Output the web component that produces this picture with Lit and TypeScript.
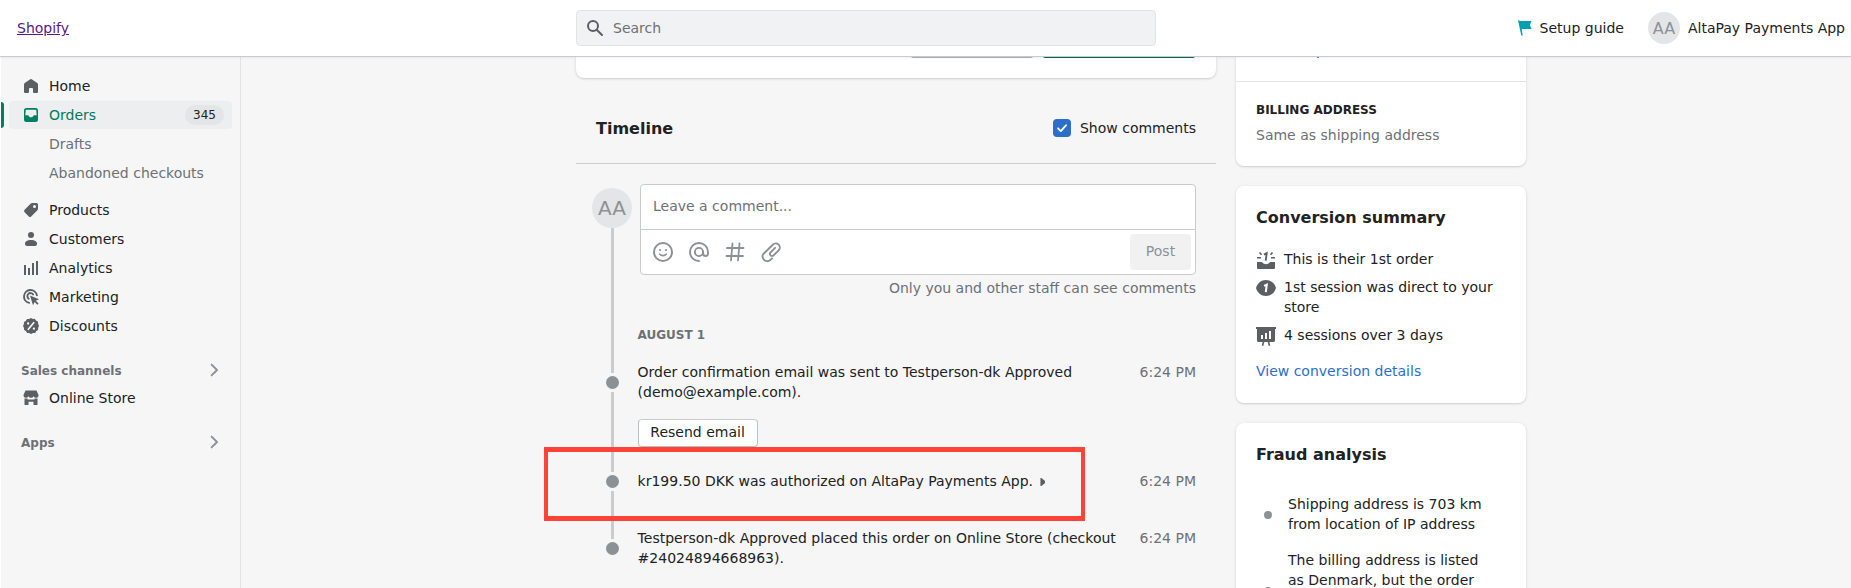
import { LitElement, html, css, svg, nothing } from "lit";
import { customElement, property } from "lit/decorators.js";

const ICONS: Record<string, unknown> = {
  home: svg`<path d="M9.300 3.200a1.100 1.100 0 0 1 1.400 0l5.600 3.700c.4.350.7.850.7 1.400V16a1 1 0 0 1-1 1h-3a1 1 0 0 1-1-1v-3a1 1 0 0 0-1-1H9a1 1 0 0 0-1 1v3a1 1 0 0 1-1 1H4a1 1 0 0 1-1-1V8.300c0-.55.3-1.050.7-1.400z"/>`,
  orders: svg`<path fill-rule="evenodd" d="M5.500 3h9A2.500 2.500 0 0 1 17 5.500v9a2.500 2.500 0 0 1-2.500 2.500h-9A2.500 2.500 0 0 1 3 14.500v-9A2.500 2.500 0 0 1 5.500 3zm0 1.700a.8.800 0 0 0-.8.700L4.300 10.200H6.800c.5 0 .8.300 1 .700.3.800 1.100 1.300 2.200 1.300s1.900-.5 2.200-1.300c.2-.4.5-.7 1-.7h2.500l-.4-4.800a.8.800 0 0 0-.8-.7z"/>`,
  products: svg`<path fill-rule="evenodd" d="M11.300 3H15.500A1.500 1.500 0 0 1 17 4.500v4.200c0 .6-.2 1.100-.6 1.500l-6.200 6.200a1.700 1.700 0 0 1-2.400 0l-4.200-4.200a1.700 1.700 0 0 1 0-2.400l6.200-6.200c.4-.4.900-.6 1.500-.6zM13.500 8a1.500 1.500 0 1 0 0-3 1.500 1.500 0 0 0 0 3z"/>`,
  customers: svg`<circle cx="10" cy="6" r="3"/><path d="M4 14.300C4 12.400 6.600 11 10 11s6 1.400 6 3.300V15a2 2 0 0 1-2 2H6a2 2 0 0 1-2-2z"/>`,
  analytics: svg`<path d="M3 7h2v10H3zM7 10h2v7H7zM11 5h2v12h-2zM15 3h2v14h-2z"/>`,
  marketing: svg`<g fill="none" stroke="currentColor" stroke-width="1.900" stroke-linecap="round"><path d="M8.200 15.900a6.500 6.500 0 1 1 7.700-7.500"/><path d="M7.700 11.700a3.100 3.100 0 1 1 4.400-4.200"/></g><path d="M9 8.600l9 3.600-3.200 1.600 2.800 2.800-1.200 1.200-2.800-2.800L12 18.200z"/>`,
  discounts: svg`<path fill-rule="evenodd" d="M10 2l1.800.9 2-.1 1.200 1.700 1.900.9.200 2L18 10l-.9 1.900v2l-1.800 1.200-1.100 1.800-2.100.1L10 18l-1.900-.9-2-.2-1.200-1.800-1.800-1.100-.1-2.100L2 10l.9-1.900.1-2 1.800-1.200L6 3.100l2.100-.2z"/><path d="M7.300 13.300L12.700 6.700" stroke="#f6f6f7" stroke-width="1.700" stroke-linecap="round"/><circle cx="7.100" cy="7.500" r="1.150" fill="#f6f6f7"/><circle cx="12.900" cy="12.700" r="1.150" fill="#f6f6f7"/>`,
  store: svg`<path d="M4.500 2.500h11L17.500 7v.8a2.100 2.100 0 0 1-2.300 1.900 2.600 2.600 0 0 1-2.600-1.500A2.700 2.700 0 0 1 10 9.700a2.700 2.700 0 0 1-2.600-1.500 2.600 2.600 0 0 1-2.600 1.500A2.200 2.200 0 0 1 2.500 7.800V7z"/><path d="M3.500 10.600h3v1h7v-1h3V17h-4v-3.300H7.500V17h-4z"/>`,
  chevron: svg`<path d="M7.600 4.600l5.400 5.400-5.400 5.400" fill="none" stroke="currentColor" stroke-width="1.900" stroke-linecap="round" stroke-linejoin="round"/>`,
  search: svg`<circle cx="8" cy="8" r="5" fill="none" stroke="currentColor" stroke-width="2"/><path d="M11.700 11.700L17 17" stroke="currentColor" stroke-width="2" stroke-linecap="round"/>`,
  flag: svg`<path d="M3 2.200h1.300L4.500 3H16.600l-1.900 4.100 2 4H6.700L7.700 17.500H6.300z"/>`,
  smile: svg`<circle cx="10" cy="10" r="9" fill="none" stroke="currentColor" stroke-width="2"/><path d="M6.800 12.200a4.300 4.300 0 0 0 6.400 0" fill="none" stroke="currentColor" stroke-width="1.600" stroke-linecap="round"/><circle cx="7" cy="8" r="1.100"/><circle cx="13" cy="8" r="1.100"/>`,
  mention: svg`<g fill="none" stroke="currentColor" stroke-width="1.900" stroke-linecap="round"><circle cx="10" cy="10" r="4.100"/><path d="M14.100 10v1.500a2.450 2.450 0 0 0 4.900 0V10a9 9 0 1 0-9 9"/></g>`,
  hash: svg`<path d="M7.500 1.500l-1.500 17M14.500 1.500l-1.500 17M2 6h16.500M1.500 14H18" fill="none" stroke="currentColor" stroke-width="1.800" stroke-linecap="round"/>`,
  clip: svg`<path d="M11 16.300l-1.300 1.300c-1.500 1.500-3.900 1.800-5.800.9-2.700-1.700-3.100-4.900-1.300-6.800l9.200-9c1.700-1.700 4.200-1.700 5.800-.1s1.600 4.100 0 5.700l-5 5a2.100 2.100 0 0 1-3-3l4.500-4.500" fill="none" stroke="currentColor" stroke-width="1.900" stroke-linecap="round" stroke-linejoin="round"/>`,
  check: svg`<path d="M5.600 10.300l3.100 3.100 5.900-6.600" fill="none" stroke="currentColor" stroke-width="2" stroke-linecap="round" stroke-linejoin="round"/>`,
  firstOrder: svg`<path d="M1 12h4.300c.6 0 1 .3 1.400.8.800 1 2 1.400 3.300 1.400s2.500-.4 3.300-1.400c.4-.5.800-.8 1.400-.8H19v6a1 1 0 0 1-1 1H2a1 1 0 0 1-1-1z"/><path d="M1 7.700h4M15 7.700h4M3.500 2.500l2 2.200M16.500 2.500l-2 2.200" stroke="currentColor" stroke-width="1.600"/><path d="M8 4.700l2.700-1.500-1 7.500" fill="none" stroke="currentColor" stroke-width="1.900"/>`,
  firstSession: svg`<path d="M10 2c5 0 8.600 3.300 10 8-1.400 4.700-5 8-10 8S1.400 14.700 0 10c1.400-4.700 5-8 10-8z"/><path d="M8.100 7.900l2.700-1.300-1 7.600" fill="none" stroke="#fff" stroke-width="2"/>`,
  sessions: svg`<path fill-rule="evenodd" d="M0 1h20v2h-1v11.500a1.500 1.500 0 0 1-1.500 1.500h-15A1.500 1.500 0 0 1 1 14.500V3H0zM5 9v4h2V9zm4-2v6h2V7zm4-2v8h2V5z"/><path d="M7.500 16l-1 3.700M12.500 16l1 3.700" stroke="currentColor" stroke-width="1.600"/>`,
};

@customElement("ui-icon")
class UiIcon extends LitElement {
  static styles = css`
    :host { display: block; width: 20px; height: 20px; flex: none; }
    svg { display: block; width: 100%; height: 100%; fill: currentColor; }
  `;
  @property() name = "";
  render() {
    return html`<svg viewBox="0 0 20 20" aria-hidden="true">${ICONS[this.name] ?? nothing}</svg>`;
  }
}

@customElement("side-nav")
class SideNav extends LitElement {
  static styles = css`
    :host { display: block; box-sizing: border-box; width: 241px; padding: 16px 8px 0; border-right: 1px solid #e1e3e5; border-left: 1px solid #fff; color: #202223; }
    .group { display: grid; gap: 1px; }
    .later { margin-top: 9px; }
    .row { display: flex; align-items: center; height: 28px; padding: 0 8px 0 12px; border-radius: 4px; position: relative; }
    .row ui-icon { color: #5c5f62; margin-right: 8px; }
    .active { background: #edeeef; color: #007a5c; }
    .row.active ui-icon { color: #008060; }
    .active::before { content: ""; position: absolute; left: -8px; top: 1px; width: 3px; height: 26px; background: #008060; border-radius: 0 3px 3px 0; }
    .badge { margin-left: auto; padding: 0 8px; border-radius: 10px; line-height: 20px; font-size: 12px; background: #e4e5e7; color: #202223; }
    .sub { padding-left: 40px; color: #6d7175; }
    .section { display: flex; justify-content: space-between; align-items: center; height: 24px; padding: 0 8px 0 12px; font-size: 12px; font-weight: 700; color: #6d7175; }
    .section span { padding-top: 2px; }
    .section ui-icon { color: #8c9196; }
    .channels { margin-top: 18px; }
    .channels .row { margin-top: 2px; }
    .apps { margin-top: 18px; }
  `;
  row(icon: string, label: string) {
    return html`<div class="row"><ui-icon name=${icon}></ui-icon><span>${label}</span></div>`;
  }
  render() {
    return html`
      <nav>
        <div class="group">
          ${this.row("home", "Home")}
          <div class="row active"><ui-icon name="orders"></ui-icon><span>Orders</span><span class="badge">345</span></div>
          <div class="row sub">Drafts</div>
          <div class="row sub">Abandoned checkouts</div>
        </div>
        <div class="group later">
          ${this.row("products", "Products")} ${this.row("customers", "Customers")}
          ${this.row("analytics", "Analytics")} ${this.row("marketing", "Marketing")}
          ${this.row("discounts", "Discounts")}
        </div>
        <div class="channels">
          <div class="section"><span>Sales channels</span><ui-icon name="chevron"></ui-icon></div>
          ${this.row("store", "Online Store")}
        </div>
        <div class="section apps"><span>Apps</span><ui-icon name="chevron"></ui-icon></div>
      </nav>`;
  }
}

@customElement("order-timeline")
class OrderTimeline extends LitElement {
  static styles = css`
    :host { display: block; }
    .head { display: flex; justify-content: space-between; align-items: center; height: 70px; padding: 0 20px; border-bottom: 1px solid #c9cccf; }
    h2 { margin: 0; padding-top: 1px; font-size: 16px; font-weight: 600; }
    .toggle { display: flex; align-items: center; gap: 9px; }
    .box { width: 18px; height: 18px; border-radius: 4px; background: #2c6ecb; color: #fff; }
    .box ui-icon { width: 18px; height: 18px; }
    .composer { display: grid; grid-template-columns: 40px 556px; gap: 8px; padding: 20px 0 0 16px; }
    .rail { display: grid; grid-template-rows: 40px 1fr; padding-top: 4px; justify-items: center; }
    .avatar { width: 40px; height: 40px; border-radius: 50%; background: #e4e5e7; color: #8c9196; font-size: 20px; line-height: 41px; text-align: center; }
    .line { width: 3px; background: #c9cccf; margin-left: 1px; }
    .editor { border: 1px solid #c9cccf; border-radius: 4px; background: #fff; height: 89px; }
    .input { height: 44px; line-height: 43px; padding: 0 12px; color: #6d7175; border-bottom: 1px solid #c9cccf; }
    .tools { display: flex; align-items: center; gap: 16px; height: 44px; padding: 0 4px 0 12px; color: #8c9196; }
    .post { margin-left: auto; width: 61px; line-height: 34px; padding-bottom: 2px; border-radius: 4px; text-align: center; background: #f1f1f1; }
    .note { margin: 3px 0 0; line-height: 20px; text-align: right; color: #6d7175; }
    .date { margin: 27px 0 0 -2.400px; font-size: 12px; line-height: 20px; font-weight: 700; color: #6d7175; height: 36px; }
    .event { display: grid; grid-template-columns: 40px 480px 1fr; column-gap: 5.600px; padding: 0 20px 0 16px; line-height: 20px; }
    .track { display: grid; grid-template-rows: var(--before) 13px 1fr; row-gap: 3px; justify-items: center; }
    .dot { width: 13px; height: 13px; border-radius: 50%; background: #8c9196; margin-left: 1px; }
    .time { text-align: right; color: #6d7175; white-space: nowrap; }
    .e1 { height: 101px; --before: 12px; }
    .e1 .copy, .e1 .time { padding-top: 1px; }
    .e2 { height: 66px; --before: 10px; }
    .e2 .copy, .e2 .time { padding-top: 9px; }
    .e3 { --before: 11px; }
    .resend { display: block; box-sizing: border-box; width: 120px; height: 28px; margin: 17px 0 0; line-height: 25px; text-align: center; border: 1px solid #babfc3; border-top-color: #c9cccf; border-radius: 4px; background: #fff; }
    .caret { display: inline-block; width: 5px; height: 8px; margin-left: 3px; background: #5c5f62; clip-path: polygon(0 0, 20% 0, 100% 40%, 100% 60%, 20% 100%, 0 100%); }
  `;
  render() {
    return html`
      <div class="head">
        <h2>Timeline</h2>
        <div class="toggle"><span class="box"><ui-icon name="check"></ui-icon></span><span>Show comments</span></div>
      </div>
      <div class="composer">
        <div class="rail"><div class="avatar">AA</div><div class="line"></div></div>
        <div>
          <div class="editor">
            <div class="input">Leave a comment...</div>
            <div class="tools">
              <ui-icon name="smile"></ui-icon><ui-icon name="mention"></ui-icon>
              <ui-icon name="hash"></ui-icon><ui-icon name="clip"></ui-icon>
              <span class="post">Post</span>
            </div>
          </div>
          <p class="note">Only you and other staff can see comments</p>
          <p class="date">AUGUST 1</p>
        </div>
      </div>
      <div class="event e1">
        <div class="track"><div class="line"></div><div class="dot"></div><div class="line"></div></div>
        <div class="copy">Order confirmation email was sent to Testperson-dk Approved (demo@example.com).<span class="resend">Resend email</span></div>
        <div class="time">6:24 PM</div>
      </div>
      <div class="event e2">
        <div class="track"><div class="line"></div><div class="dot"></div><div class="line"></div></div>
        <div class="copy">kr199.50 DKK was authorized on AltaPay Payments App. <span class="caret"></span></div>
        <div class="time">6:24 PM</div>
      </div>
      <div class="event e3">
        <div class="track"><div class="line"></div><div class="dot"></div></div>
        <div class="copy">Testperson-dk Approved placed this order on Online Store (checkout #24024894668963).</div>
        <div class="time">6:24 PM</div>
      </div>`;
  }
}

@customElement("order-aside")
class OrderAside extends LitElement {
  static styles = css`
    :host { display: grid; gap: 20px; width: 290px; align-content: start; line-height: 20px; }
    .card { box-sizing: border-box; background: #fff; border-radius: 8px; box-shadow: 0 0 5px rgba(23,24,24,.05), 0 1px 2px rgba(23,24,24,.15); padding: 20px; }
    .address { padding: 0; border-radius: 0 0 8px 8px; height: 110px; }
    .above { height: 24px; padding: 1px 0 0 81px; border-bottom: 1px solid #e1e3e5; }
    .tail { width: 2px; height: 1px; background: #2c6ecb; opacity: .8; }
    .billing { padding: 18px 20px; }
    h3 { margin: 0 0 5px; font-size: 12px; line-height: 20px; font-weight: 700; }
    p { margin: 0; color: #6d7175; }
    h2 { margin: 0; font-size: 16px; line-height: 24px; font-weight: 600; }
    .conversion { height: 217px; }
    .facts { display: grid; gap: 8px; margin-top: 19px; }
    .fact { display: grid; grid-template-columns: 20px 1fr; gap: 8px; min-height: 20px; }
    .fact ui-icon { color: #5c5f62; margin: 1px 0 -1px; }
    .link { display: block; margin-top: 16px; color: #2c6ecb; }
    .fraud { height: 290px; }
    .risk { display: grid; grid-template-columns: 8px 205px; column-gap: 16px; align-items: center; padding-left: 8px; margin-bottom: 16px; }
    .long { min-height: 80px; }
    .long span { align-self: start; }
    .risks { padding-top: 27px; }
    .dot { width: 8px; height: 8px; border-radius: 50%; background: #8c9196; margin-top: 2px; }
  `;
  fact(icon: string, text: string) {
    return html`<div class="fact"><ui-icon name=${icon}></ui-icon><span>${text}</span></div>`;
  }
  render() {
    return html`
      <section class="card address">
        <div class="above"><div class="tail"></div></div>
        <div class="billing"><h3>BILLING ADDRESS</h3><p>Same as shipping address</p></div>
      </section>
      <section class="card conversion">
        <h2>Conversion summary</h2>
        <div class="facts">
          ${this.fact("firstOrder", "This is their 1st order")}
          ${this.fact("firstSession", "1st session was direct to your store")}
          ${this.fact("sessions", "4 sessions over 3 days")}
        </div>
        <span class="link">View conversion details</span>
      </section>
      <section class="card fraud">
        <h2>Fraud analysis</h2>
        <div class="risks">
          <div class="risk"><i class="dot"></i><span>Shipping address is 703 km from location of IP address</span></div>
          <div class="risk long"><i class="dot"></i><span>The billing address is listed<br />as Denmark, but the order</span></div>
        </div>
      </section>`;
  }
}

@customElement("app-root")
class AppRoot extends LitElement {
  static styles = css`
    :host { display: grid; grid-template-rows: 56px 532px; width: 1851px; height: 588px; overflow: hidden; position: relative; background: #f6f6f7; color: #202223; font: 14px/20px "DejaVu Sans", sans-serif; }
    .top { display: grid; grid-template-columns: 560px 580px 1fr; padding: 0 6px 0 16px; align-items: center; background: #fff; box-shadow: 0 1px 0 #c9cad0, 0 2px 2px rgba(0,0,0,.06); position: relative; z-index: 1; }
    .brand { color: #551a8b; text-decoration: underline; padding-left: 1px; }
    .search { box-sizing: border-box; height: 36px; display: flex; align-items: center; gap: 8px; padding-left: 8px; border: 1px solid #e1e3e5; border-radius: 4px; background: #f1f2f4; color: #6d7175; }
    .search ui-icon { color: #5c5f62; }
    .account { display: flex; justify-content: flex-end; align-items: center; }
    .account ui-icon { color: #00a0ac; margin-right: 5px; }
    .avatar { width: 32px; height: 32px; line-height: 33px; border-radius: 50%; background: #e4e5e7; color: #8c9196; font-size: 16px; text-align: center; margin: 0 8px 0 24px; }
    .body { display: grid; grid-template-columns: 241px 975px 290px; overflow: hidden; }
    .main { margin-left: 335px; width: 640px; }
    order-aside { margin-left: 20px; }
    .stub { box-sizing: border-box; height: 22px; margin-bottom: 15px; padding-right: 21px; display: flex; justify-content: flex-end; gap: 10px; background: #fff; border-radius: 0 0 8px 8px; box-shadow: 0 0 5px rgba(23,24,24,.05), 0 1px 2px rgba(23,24,24,.15); }
    .edge { height: 2px; width: 122px; background: #aeb3b8; border-radius: 0 0 3px 3px; }
    .primary { width: 152px; background: #006e52; }
    .mark { position: absolute; box-sizing: border-box; left: 544px; top: 447px; width: 541px; height: 74px; border: 4px solid #ff4238; border-width: 5px 4px; }
  `;
  render() {
    return html`
      <header class="top">
        <div><span class="brand">Shopify</span></div>
        <div class="search"><ui-icon name="search"></ui-icon><span>Search</span></div>
        <div class="account">
          <ui-icon name="flag"></ui-icon><span>Setup guide</span>
          <span class="avatar">AA</span><span>AltaPay Payments App</span>
        </div>
      </header>
      <div class="body">
        <side-nav></side-nav>
        <main class="main">
          <div class="stub"><div class="edge"></div><div class="edge primary"></div></div>
          <order-timeline></order-timeline>
        </main>
        <order-aside></order-aside>
      </div>
      <div class="mark"></div>`;
  }
}
